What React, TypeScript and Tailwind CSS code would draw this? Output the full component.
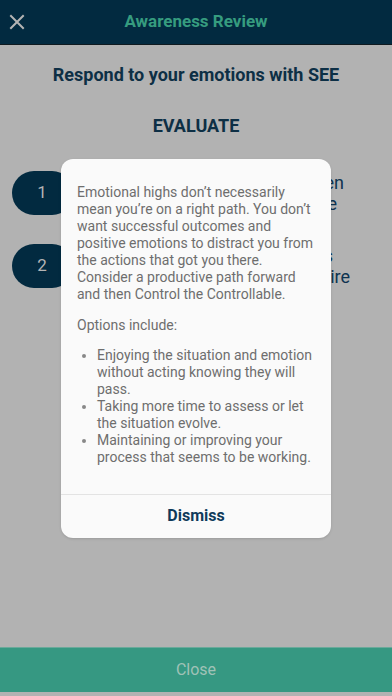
import React from 'react';

const steps = [
  { n: '1', lines: [{ t: 'Recognize when', mr: 'mr-[48px]' }, { t: 'you feel the gap le', mr: 'mr-[55px]' }] },
  { n: '2', lines: [{ t: 'Identify emotions', mr: 'mr-[59px]' }, { t: 'that you desire', mr: 'mr-[42px]' }] },
];

const App: React.FC = () => {
  return (
    <div className="relative w-[392px] h-[696px] overflow-hidden bg-[#b2b2b2] flex flex-col font-['Roboto',sans-serif]">
      <header className="h-[45px] shrink-0 bg-[#022a40] border-b border-[#0f1a20] flex items-center relative">
        <svg className="absolute left-[9px] top-[14px]" width="16" height="16" viewBox="0 0 16 16" fill="none" stroke="#b4b4b4" strokeWidth="2" strokeLinecap="square">
          <path d="M2 2 L14 14 M14 2 L2 14" />
        </svg>
        <h1 className="w-full text-center text-[17px] font-bold text-[#369c7f]">Awareness Review</h1>
      </header>

      <main className="flex-1 flex flex-col">
        <h2 className="pt-[19px] text-center text-[18px] leading-[22px] font-bold text-[#0d2f45]">Respond to your emotions with SEE</h2>
        <h3 className="pt-[29px] text-center text-[18px] leading-[22px] font-bold text-[#0d2f45]">EVALUATE</h3>

        <div className="mt-[34px] flex flex-col gap-[29px]">
          {steps.map((s) => (
            <div key={s.n} className="flex items-center pl-[12px]">
              <div className="w-[62px] h-[44px] rounded-full bg-[#022a40] flex items-center justify-center text-[17px] text-[#b4b4b4] shrink-0 pr-[2px]">
                {s.n}
              </div>
              <div className="flex-1 flex flex-col items-end text-[18px] leading-[21px] text-[#0d3350]">
                {s.lines.map((l) => (
                  <span key={l.t} className={`whitespace-nowrap ${l.mr}`}>{l.t}</span>
                ))}
              </div>
            </div>
          ))}
        </div>
      </main>

      <button className="h-[45px] shrink-0 bg-[#369882] border-t border-[#6aa99a] text-[16px] text-[#a0c2b7]">Close</button>
      <div className="h-[4px] shrink-0" />

      <div className="absolute inset-0 flex items-center justify-center">
        <div className="w-[270px] rounded-[12px] bg-[#fafafa] shadow-sm">
          <div className="px-[16px] pt-[25px] pb-[28px] text-[14px] leading-[17px] text-[#6e6e6e]">
            <p>
              Emotional highs don’t necessarily mean you’re on a right path. You don’t want successful outcomes and positive emotions to distract you from the actions that got you there. Consider a productive path forward and then Control the Controllable.
            </p>
            <p className="mt-[14px]">Options include:</p>
            <ul className="mt-[13px] list-disc pl-[20px] marker:text-[#888]">
              <li>Enjoying the situation and emotion without acting knowing they will pass.</li>
              <li>Taking more time to assess or let the situation evolve.</li>
              <li>Maintaining or improving your process that seems to be working.</li>
            </ul>
          </div>
          <div className="h-[44px] border-t border-[#e3e3e3] flex items-center justify-center text-[16px] font-bold text-[#0f3a5a]">
            Dismiss
          </div>
        </div>
      </div>
    </div>
  );
};

export default App;
